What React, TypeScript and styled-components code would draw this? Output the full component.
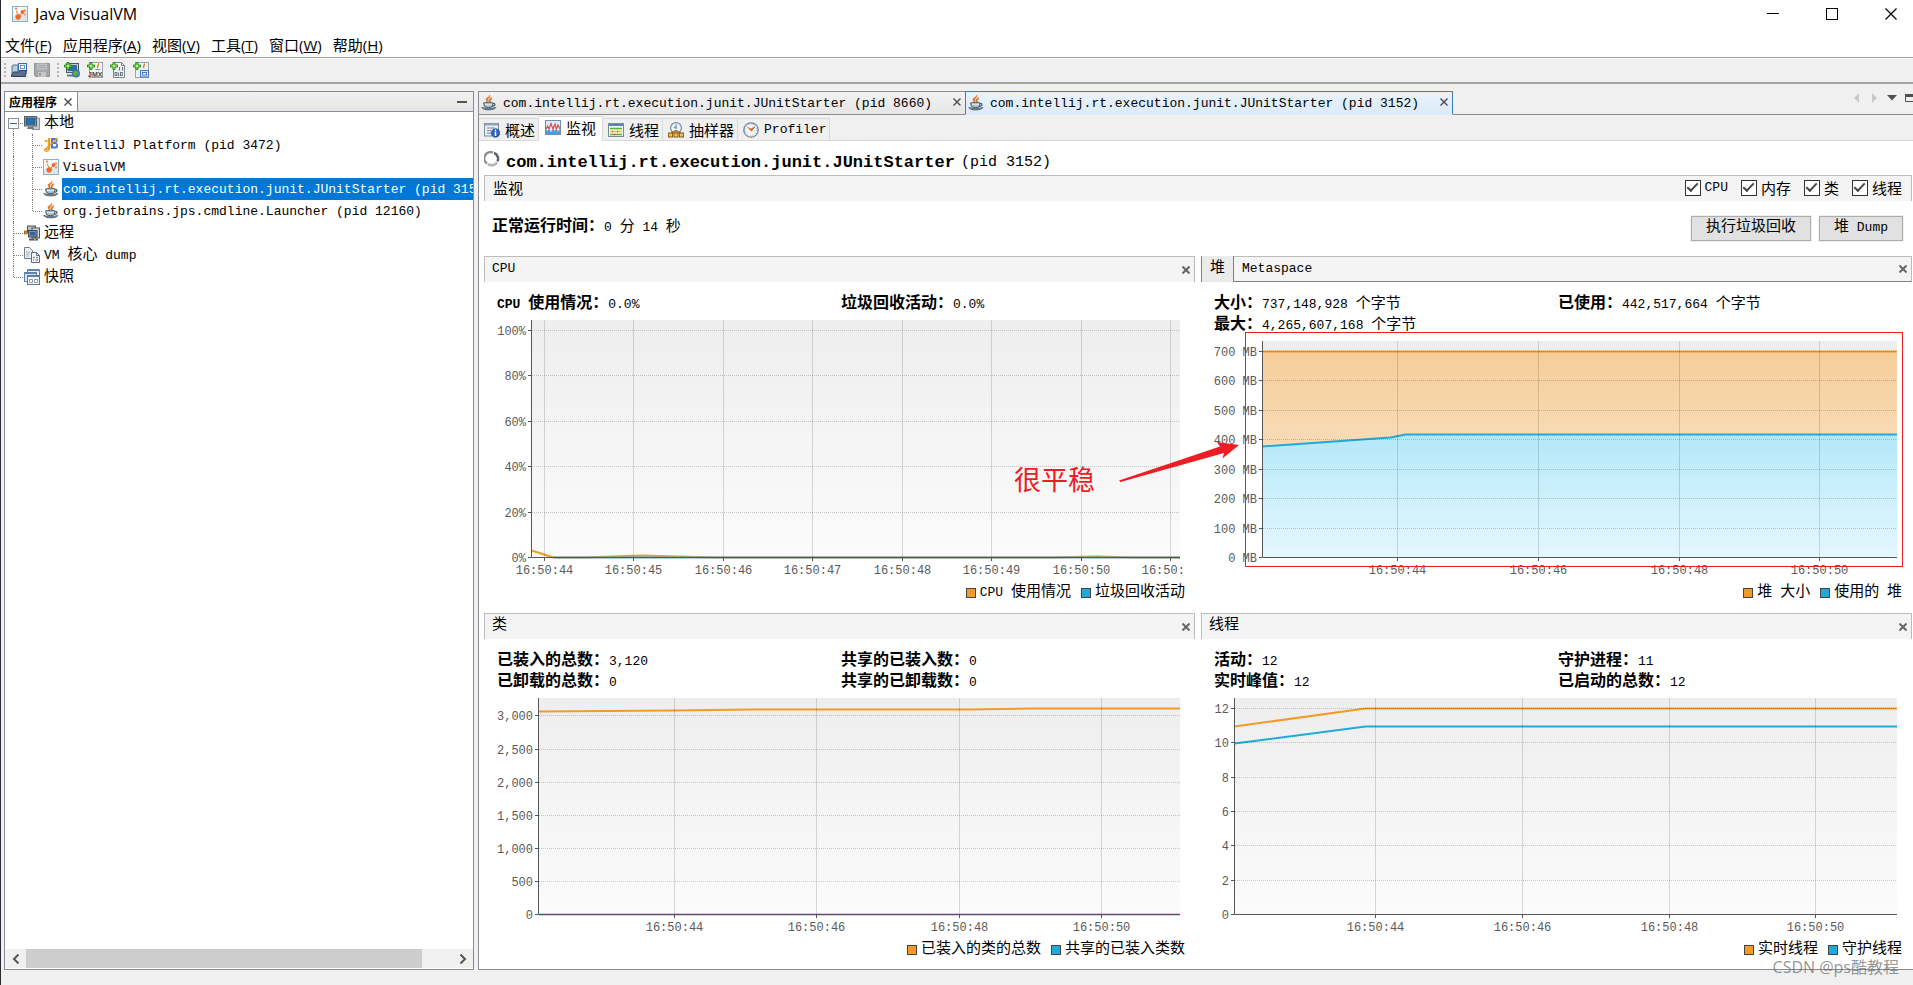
import React, { useLayoutEffect, useRef, useState } from "react";
import styled, { createGlobalStyle, css } from "styled-components";

const MONO = `"Liberation Mono", "Noto Sans CJK SC", monospace`;
const UI = `"Open Sans", "Noto Sans CJK SC", sans-serif`;
const LINE = "#8a8b94";
const ORANGE = "#f39a27";
const BLUE = "#22a9dc";

const GlobalStyle = createGlobalStyle`
  *, *::before, *::after { box-sizing: border-box; }
  body { margin: 0; background: #f0f0f0; color: #000; font-family: ${MONO}; font-size: 13px; }
  button { font: inherit; color: inherit; margin: 0; padding: 0; border: 0; background: none; }
  ul { list-style: none; margin: 0; padding: 0; }
  svg { display: block; flex: none; }
`;

/* ---------- mixed Latin / Chinese text ---------- */

const Han = styled.span`
  font-size: 15px;
  strong & { font-size: 16px; }
`;

const Mixed = ({ text }: { text: string }) => (
  <span>
    {text
      .split(/([\u3000-\u9fff\uff00-\uffef]+)/)
      .filter(Boolean)
      .map((run, i) => (/[\u3000-\uffef]/.test(run) ? <Han key={i}>{run}</Han> : run))}
  </span>
);

/* ---------- icons ---------- */

const Icon = ({ children, size = 16 }: { children: React.ReactNode; size?: number }) => (
  <svg width={size} height={size} viewBox="0 0 16 16" aria-hidden="true">
    {children}
  </svg>
);

const VisualVmIcon = () => (
  <Icon>
    <rect x=".5" y=".5" width="15" height="15" fill="#f6f9fb" stroke="#8fb0c4" />
    <path d="M1 15V10l14-5v10z" fill="#dce8ee" />
    <path d="M3.500 9.500L6 8l2.500 1 .8 2-1.800 2.500-2.500.2-1.500-1.700z" fill="#f26a21" />
    <circle cx="10.500" cy="6" r="1.900" fill="#f26a21" />
    <circle cx="12.800" cy="4.500" r="1.200" fill="#f58a4b" />
    <circle cx="4" cy="2.500" r="1" fill="#f26a21" />
    <circle cx="13" cy="8.500" r="1" fill="#f58a4b" />
    <path d="M7.500 9.500l2.500-3M5.500 8.500L4.500 4.500" stroke="#f26a21" strokeWidth=".9" />
  </Icon>
);

const OpenIcon = () => (
  <Icon>
    <path d="M2 3h5v9H1V4z" fill="#b9cbdc" stroke="#5c7186" />
    <rect x="7.500" y="1.500" width="8" height="7" fill="#e6effb" stroke="#3f6db4" />
    <rect x="9.500" y="3.500" width="4" height="3" fill="#fff" stroke="#6d94cf" />
    <path d="M.5 14.500V13l2-3h5l2-1.500h6l-1 6z" fill="#54718f" stroke="#2f455c" />
  </Icon>
);

const SaveIcon = () => (
  <Icon>
    <path d="M.5 1.500h15v13h-14l-1-1z" fill="#a4a6a9" stroke="#909295" />
    <rect x="3" y="1.500" width="10" height="6" fill="#bfc1c3" />
    <path d="M4 3.500h8M4 5.500h8" stroke="#a4a6a9" />
    <rect x="4" y="10" width="8" height="5" fill="#c3c5c7" />
    <rect x="5" y="11" width="2" height="3" fill="#96989b" />
  </Icon>
);

const Plus = () => (
  <path d="M3 .5h2v2.500h2.500v2H5v2.500H3V5H.5V3H3z" fill="#b5f07a" stroke="#1f8a13" />
);

const AddRemoteIcon = () => (
  <Icon>
    <rect x="2.500" y="1.500" width="12" height="9" fill="#c3cbd2" stroke="#4d5862" />
    <rect x="4" y="3" width="9" height="6" fill="#2e6ea6" />
    <path d="M3 13.500h7" stroke="#6a747d" strokeWidth="2" />
    <circle cx="12" cy="11.500" r="3.800" fill="#3f86c8" stroke="#2d5f85" strokeWidth=".6" />
    <path d="M10 9.500l2-.5 1.500 1.500-1 2.500-2 1-1-2zM14 12l1-1v2z" fill="#5db04a" />
    <Plus />
  </Icon>
);

const JmxText = styled.text`
  font: bold 7px "Liberation Sans", sans-serif;
  fill: #3d4852;
`;

const AddJmxIcon = () => (
  <Icon>
    <rect x="2.500" y=".5" width="13" height="15" fill="#f3f5f7" stroke="#98a3ae" />
    <path d="M11 1.500c2 1.500-2 2.500 0 4.500" stroke="#e0771d" fill="none" strokeWidth="1.300" />
    <path d="M8.500 7.500h5" stroke="#7d93a5" />
    <JmxText x="1" y="15">JMX</JmxText>
    <Plus />
  </Icon>
);

const AddDumpIcon = () => (
  <Icon>
    <path d="M3.500 .5h8l3 3v12h-11z" fill="#f3f5f7" stroke="#7b8893" />
    <path d="M11.500 .5v3h3" fill="none" stroke="#7b8893" />
    <path d="M9.500 5v3.500M12.500 5v3.500M8.500 10.500V14" stroke="#6a7883" strokeWidth="1.200" />
    <rect x="5" y="10.500" width="1.800" height="3" fill="none" stroke="#6a7883" />
    <rect x="10.500" y="10.500" width="1.800" height="3" fill="none" stroke="#6a7883" />
    <Plus />
  </Icon>
);

const AddSnapshotIcon = () => (
  <Icon>
    <rect x="2.500" y=".5" width="13" height="15" fill="#edf2f7" stroke="#98a3ae" />
    <path d="M11 1.500c2 1.500-2 2.500 0 4.500" stroke="#e0771d" fill="none" strokeWidth="1.300" />
    <rect x="7.500" y="8.500" width="8" height="6.500" fill="#dbe8f8" stroke="#4a76bd" />
    <rect x="9.500" y="10.500" width="4" height="2.500" fill="#fff" stroke="#4a76bd" />
    <Plus />
  </Icon>
);

const LocalIcon = () => (
  <Icon>
    <path d="M11 3h4.500v11.500H8z" fill="#c5cbd0" stroke="#87919a" />
    <rect x=".5" y="1.500" width="12" height="9.500" fill="#9aa5ae" stroke="#56616b" />
    <rect x="2" y="3" width="9" height="6.500" fill="#2e6ea6" stroke="#1e4e7b" strokeWidth=".6" />
    <path d="M4 11.500h5l1 2.500H3z" fill="#6f7982" />
  </Icon>
);

const IntelliJIcon = () => (
  <Icon>
    <path d="M8 1h4.500c2.800 0 2.800 4.500.2 4.800 3.200.2 3.200 5.700 0 5.700H8zM10 3v2h2c1.200 0 1.200-2 0-2zM10 7v2.500h2.300c1.300 0 1.300-2.500 0-2.500z" fill="#4a79cc" fillRule="evenodd" />
    <path d="M6 1v9.500c0 3-3.500 4-4.500 1.500" stroke="#f09a18" strokeWidth="2.400" fill="none" />
    <path d="M2 12.500L14.500 1M1.500 3.500l3 1" stroke="#f09a18" strokeWidth="1.500" />
    <circle cx="4" cy="13.500" r="1.500" fill="#f7b64c" />
  </Icon>
);

const JavaIcon = () => (
  <Icon>
    <path d="M8.500 0c2 2.500-3.500 3.500-1.500 7.500C4 5 4.500 3.500 7 2.200 8.300 1.600 8.800 1 8.500 0zM10.500 2.500C12 4 8 5 9.500 8 6.500 6 8 4 10.500 2.500z" fill="#e8731a" stroke="#e8731a" strokeWidth=".5" />
    <path d="M2.500 8c2-1 8.500-1 9.500 0l-.5 3.500C10 13 5 13 3.500 11.500z" fill="#a9bbc7" stroke="#465a68" />
    <path d="M12 8.500c2.800-.5 2.800 2.500-.6 2.800" fill="none" stroke="#465a68" strokeWidth="1.200" />
    <path d="M4 9.200c2 .8 5 .8 7 0" stroke="#eef3f6" fill="none" />
    <path d="M.8 12.500c3 1.200 10.500 1.200 14 0-1 3-12.500 3.400-14 0z" fill="#8ba1af" stroke="#465a68" strokeWidth=".9" />
  </Icon>
);

const RemoteIcon = () => (
  <Icon>
    <rect x="3.500" y="1" width="8" height="6" fill="#b9c1c7" stroke="#4b555e" />
    <rect x="8" y="3" width="7.500" height="10" fill="#d4d9dd" stroke="#4b555e" />
    <rect x="4.500" y="5.500" width="8.500" height="6.500" fill="#8795a1" stroke="#39444e" />
    <rect x="6" y="7" width="5.500" height="3.500" fill="#2d64a4" />
    <path d="M5 14.500h9" stroke="#4b555e" strokeWidth="2" />
    <path d="M0 7.500h4" stroke="#6a4a16" />
    <rect x=".5" y="6" width="2.500" height="3" fill="#e39b2b" stroke="#87560f" strokeWidth=".7" />
    <rect x="10" y="14" width="2" height="1" fill="#7ad14b" />
  </Icon>
);

const CoreDumpIcon = () => (
  <Icon>
    <path d="M.5 .5h5l3 3v8h-8z" fill="#eef1f4" stroke="#6f7e8b" />
    <path d="M2 5h4M2 7h4M2 9h3" stroke="#a5b0ba" />
    <path d="M7.500 5.500h5l3 3v7h-8z" fill="#f5f7f9" stroke="#5f6f7c" />
    <path d="M12.500 5.500v3h3" fill="none" stroke="#5f6f7c" />
    <path d="M9 10.500h2m1 0h2M9 13h1m1.500 0H14" stroke="#8794a0" strokeWidth="1.300" />
  </Icon>
);

const SnapshotIcon = () => (
  <Icon>
    <path d="M3.500 4V.5h12v9H13" fill="#e9eff7" stroke="#5e82b5" />
    <path d="M4 1.500h11" stroke="#5e82b5" />
    <rect x=".5" y="3.500" width="12" height="9" fill="#dde7f4" stroke="#5e82b5" />
    <path d="M1 4.500h11" stroke="#5e82b5" />
    <rect x="3.500" y="6.500" width="12" height="9" fill="#f3f6fa" stroke="#5e7896" />
    <path d="M4 7.500h11" stroke="#5e82b5" />
    <path d="M5.500 10.500h3v3h-3zM10.500 10.500h3v3h-3z" fill="#fff" stroke="#8898a8" />
  </Icon>
);

const OverviewIcon = () => (
  <Icon>
    <rect x=".5" y="1.500" width="14" height="12.500" fill="#e8edf2" stroke="#7c8c9a" />
    <path d="M1 2.500h13" stroke="#93a6b6" strokeWidth="2" />
    <path d="M3 6h8M3 8.500h4M3 11h4" stroke="#7b8a97" />
    <circle cx="11.500" cy="11" r="4.300" fill="#2a62be" stroke="#173f86" strokeWidth=".6" />
    <path d="M11.500 10v4" stroke="#fff" strokeWidth="1.600" />
    <circle cx="11.500" cy="8.500" r=".9" fill="#fff" />
  </Icon>
);

const MonitorIcon = () => (
  <Icon>
    <rect x=".5" y=".5" width="15" height="14" fill="#dfeaf4" stroke="#6d8fae" />
    <path d="M1 14V9l1.500 2L4 9l2 3 2-3 1.500 2L11 9l2 2.500L15 9v5z" fill="#4b9fdc" />
    <path d="M1 9l1.500-3L4 9l2-5.500L8 9l2-5 1.500 5L13 5l2 4" fill="none" stroke="#d9514b" strokeWidth="1.200" />
  </Icon>
);

const ThreadsIcon = () => (
  <Icon>
    <rect x=".5" y="1.500" width="15" height="13" fill="#f5f7f4" stroke="#76889a" />
    <path d="M1 3h14" stroke="#5a86b5" strokeWidth="2" />
    <path d="M2 6.500h12" stroke="#5fae40" strokeWidth="1.600" />
    <path d="M2 9.500h12" stroke="#e7c23a" strokeWidth="1.600" />
    <path d="M2 12.500h12" stroke="#5fae40" strokeWidth="1.600" />
    <path d="M4 9.500h1m4 0h1M6 12.500h1" stroke="#d7573c" strokeWidth="1.600" />
  </Icon>
);

const SamplerIcon = () => (
  <Icon>
    <circle cx="8" cy="6" r="5.400" fill="#eaf1f8" stroke="#7589a0" strokeWidth="1.200" />
    <path d="M8 2.500v4M6 5l2 1.500" stroke="#4372b0" fill="none" />
    <path d="M3 11l5-2.500 5 2.500M8 8v3" stroke="#a96f14" fill="none" strokeWidth="1.200" />
    <rect x=".6" y="11" width="4" height="4" fill="#f0c45b" stroke="#8a5809" />
    <rect x="6" y="11" width="4" height="4" fill="#f0c45b" stroke="#8a5809" />
    <rect x="11.400" y="11" width="4" height="4" fill="#f0c45b" stroke="#8a5809" />
  </Icon>
);

const ProfilerIcon = () => (
  <Icon>
    <circle cx="8" cy="8" r="7.200" fill="#f1f5f9" stroke="#76879a" strokeWidth="1.300" />
    <circle cx="8" cy="8" r="5.600" fill="none" stroke="#8fb0d4" strokeDasharray="1 1.930" />
    <path d="M8.500 9.500L3.500 4.500 8 6.500l4-2z" fill="#e3722d" />
    <path d="M8 8.500l4-3.500" stroke="#c85c1a" />
  </Icon>
);

const SpinnerIcon = () => (
  <Icon>
    <path d="M3 12.500A6.200 6.200 0 0 1 9 1.700" fill="none" stroke="#8d9095" strokeWidth="2.500" />
    <path d="M10 2a6.200 6.200 0 0 1 3.500 8.500" fill="none" stroke="#5f6268" strokeWidth="2.500" />
    <path d="M13 11.500a6.200 6.200 0 0 1-9 1.500" fill="none" stroke="#b0b2b6" strokeWidth="2.500" />
  </Icon>
);

const Cross = ({ size = 8, width = 1.5, color = "#4a4a4a" }: { size?: number; width?: number; color?: string }) => (
  <svg width={size} height={size} viewBox={`0 0 ${size} ${size}`} aria-hidden="true">
    <path d={`M.5 .5L${size - 0.5} ${size - 0.5}M${size - 0.5} .5L.5 ${size - 0.5}`} stroke={color} strokeWidth={width} />
  </svg>
);

/* ---------- window frame ---------- */

const Window = styled.div`
  position: relative;
  display: flex;
  flex-direction: column;
  min-height: 100vh;
  overflow: hidden;
  border-left: 1px solid #2a2a2e;
  background: #f0f0f0;
`;

const TitleBar = styled.header`
  display: flex;
  align-items: center;
  height: 30px;
  padding: 0 16px 2px 11px;
  background: #fff;
  font: 16px ${UI};
`;

const Title = styled.h1`
  flex: 1;
  margin: 0 0 0 7px;
  font: inherit;
`;

const CaptionButtons = styled.div`
  display: flex;
  gap: 47px;
`;

const MenuBar = styled.nav`
  display: flex;
  align-items: center;
  gap: 11px;
  height: 28px;
  padding: 2px 4px 0 4px;
  background: #fff;
  border-bottom: 1px solid #a0a0a0;
  font: 15px ${UI};
`;

const Toolbar = styled.div`
  display: flex;
  align-items: center;
  gap: 7px;
  height: 26px;
  padding: 0 3px 1px;
  border-top: 1px solid #fff;
  border-bottom: 2px solid #a3a3a3;
`;

const Grip = styled.span`
  width: 2px;
  height: 15px;
  margin-right: -2px;
  background: repeating-linear-gradient(#b4b4b4 0 2px, transparent 2px 4px);
`;

const Workspace = styled.div`
  flex: 1;
  display: flex;
  gap: 4px;
  min-height: 0;
  padding: 7px 0 15px 3px;
`;

/* ---------- applications panel ---------- */

const SidePanel = styled.aside`
  flex: none;
  width: 470px;
  display: flex;
  flex-direction: column;
  border: 1px solid ${LINE};
  background: #fff;
`;

const SideHeader = styled.div`
  display: flex;
  height: 20px;
  border-bottom: 1px solid ${LINE};
  background: linear-gradient(#f2f2f2, #e4e4e4);
`;

const SideTab = styled.div`
  display: flex;
  align-items: center;
  gap: 7px;
  padding: 0 5px 0 4px;
  border-right: 1px solid ${LINE};
  background: #fff;
  font: bold 12px ${MONO};
`;

const MinimizeButton = styled.button`
  width: 10px;
  margin: 0 6px 0 auto;
  &::before { content: ""; display: block; height: 2px; background: #555; }
`;

const Tree = styled.ul`
  flex: 1;
  overflow: hidden;
`;

const TreeRow = styled.li`
  display: flex;
  align-items: center;
  height: 22px;
  white-space: pre;
`;

const TreeLabel = styled.span<{ $selected?: boolean }>`
  flex: 1 0 auto;
  height: 22px;
  margin-left: 3px;
  padding-left: 1px;
  line-height: 23px;
  ${(p) => p.$selected && css`background: #0078d7; color: #fff;`}
`;

type Rail = "through" | "end" | "start" | "line";

const Guide = styled.span<{ $rail: Rail }>`
  position: relative;
  flex: none;
  width: 19px;
  height: 22px;
  &::before {
    content: "";
    position: absolute;
    left: 8px;
    top: ${(p) => (p.$rail === "start" ? "11px" : "0")};
    height: ${(p) => (p.$rail === "end" || p.$rail === "start" ? "11px" : "22px")};
    border-left: 1px dotted #808080;
  }
  &::after {
    content: "";
    position: absolute;
    left: 9px;
    right: 1px;
    top: 11px;
    border-top: ${(p) => (p.$rail === "line" ? "0" : "1px dotted #808080")};
  }
`;

const Expander = styled.button`
  position: absolute;
  z-index: 1;
  left: 3px;
  top: 6px;
  width: 11px;
  height: 11px;
  border: 1px solid #919191;
  background: linear-gradient(90deg, #3a5fa5, #3a5fa5) center / 7px 1px no-repeat, #f8f8f8;
`;

const ScrollBar = styled.div`
  display: grid;
  grid-template-columns: 21px 1fr 21px;
  align-items: center;
  justify-items: center;
  height: 20px;
  border-bottom: 1px solid #fff;
  background: #f0f0f0;
`;

const Track = styled.div`
  width: 100%;
  height: 19px;
  &::before { content: ""; display: block; width: 93%; height: 100%; background: #cdcdcd; }
`;

/* ---------- document area ---------- */

const Main = styled.main`
  flex: 1;
  min-width: 0;
  display: flex;
  flex-direction: column;
`;

const DocTabs = styled.div`
  display: flex;
  height: 24px;
`;

const DocTab = styled.div<{ $active?: boolean }>`
  flex: 0 1 488px;
  display: flex;
  align-items: center;
  gap: 6px;
  min-width: 0;
  padding: 0 4px 0 2px;
  border: 1px solid ${(p) => (p.$active ? "#3c7fb1" : LINE)};
  border-bottom-color: ${(p) => (p.$active ? "#dcebf9" : LINE)};
  background: ${(p) => (p.$active ? "linear-gradient(#e9f3fc, #dcebf9)" : "linear-gradient(#f2f2f2, #e6e6e6)")};
  line-height: 22px;
  white-space: pre;
  & + & { margin-left: -1px; }
  span { padding-top: 2px; }
  button { margin-left: auto; margin-bottom: 2px; }
`;

const DocTools = styled.div`
  flex: 1;
  display: flex;
  justify-content: flex-end;
  align-items: flex-start;
  gap: 8px;
  padding-top: 2px;
  border-bottom: 1px solid ${LINE};
`;

const DocBody = styled.div`
  flex: 1;
  display: flex;
  flex-direction: column;
  border: solid ${LINE};
  border-width: 0 0 1px 1px;
  background: #fff;
`;

const ViewTabs = styled.div`
  display: flex;
  align-items: flex-end;
  height: 26px;
  border-bottom: 1px solid #d9d9d9;
  background: #f0f0f0;
`;

const ViewTab = styled.button<{ $active?: boolean }>`
  display: flex;
  align-items: center;
  gap: 5px;
  height: 22px;
  padding: 0 3px 0 5px;
  border: 1px solid #d9d9d9;
  border-width: 1px 1px 0 0;
  white-space: pre;
  ${(p) =>
    p.$active &&
    css`
      height: 25px;
      margin-bottom: -1px;
      padding: 0 6px 3px 6px;
      background: #fff;
    `}
`;

const Content = styled.div`
  flex: 1;
  display: flex;
  flex-direction: column;
  padding: 0 1px 0 5px;
`;

const Heading = styled.h2`
  display: flex;
  align-items: center;
  gap: 6px;
  height: 34px;
  margin: 0;
  padding-top: 8px;
  font: bold 17px ${MONO};
  white-space: pre;
  svg { margin-bottom: 6px; }
`;

const Pid = styled.span`
  font: 15px ${MONO};
`;

const SectionBar = styled.div`
  display: flex;
  align-items: center;
  justify-content: space-between;
  height: 26px;
  padding: 0 9px 2px 8px;
  border: 1px solid #bcbcbc;
  border-bottom: 0;
  background: #f4f4f4;
`;

const Checks = styled.div`
  display: flex;
  gap: 13px;
`;

const CheckLabel = styled.label`
  display: flex;
  align-items: center;
  gap: 4px;
`;

const CheckBox = styled.input`
  appearance: none;
  display: grid;
  place-content: center;
  width: 16px;
  height: 16px;
  margin: 0;
  border: 1px solid #333;
  background: #fff;
  &:checked::before {
    content: "";
    width: 11px;
    height: 6px;
    margin-top: -3px;
    border: solid #444;
    border-width: 0 0 2px 2px;
    transform: rotate(-47deg);
  }
`;

const Summary = styled.div`
  display: flex;
  align-items: flex-start;
  justify-content: space-between;
  height: 55px;
  padding: 15px 9px 0 8px;
  line-height: 23px;
`;

const Actions = styled.div`
  display: flex;
  gap: 8px;
`;

const PushButton = styled.button`
  height: 25px;
  padding: 0 14px 2px;
  border: 1px solid #adadad;
  background: #e1e1e1;
  outline: 1px solid #f0f0f0;
  line-height: 21px;
`;

const Grid = styled.div`
  flex: 1;
  display: grid;
  grid-template-columns: 1fr 1fr;
  grid-auto-rows: minmax(356px, 1fr);
  gap: 1px 6px;
`;

const Cell = styled.section`
  position: relative;
  display: flex;
  flex-direction: column;
  min-width: 0;
  padding-bottom: 8px;
`;

const CellBar = styled.div<{ $tabs?: boolean }>`
  display: flex;
  align-items: center;
  height: 26px;
  padding: 0 4px 0 7px;
  border: 1px solid #bcbcbc;
  border-bottom: 0;
  background: #f4f4f4;
  line-height: 21px;
  > span { padding-bottom: 2px; }
  > button:last-child { margin-left: auto; }
  ${(p) => p.$tabs && css`padding-left: 0; border-bottom: 1px solid #808080; border-left-color: #808080;`}
`;

const CellTab = styled.button<{ $active?: boolean }>`
  height: 26px;
  padding: 0 8px 2px;
  ${(p) => p.$active && css`border-right: 1px solid #808080; background: #ebebeb;`}
`;

const Facts = styled.dl`
  display: grid;
  grid-template-columns: 1fr 1fr;
  margin: 0;
  padding: 12px 10px 5px 13px;
  line-height: 21px;
  white-space: pre;
  > div { display: flex; height: 21px; }
  dt, dd { margin: 0; }
`;

const Legend = styled.div`
  display: flex;
  justify-content: flex-end;
  align-items: center;
  gap: 10px;
  height: 25px;
  padding: 2px 10px 0 0;
  line-height: 23px;
  white-space: pre;
`;

const Key = styled.span<{ $color: string }>`
  display: flex;
  align-items: center;
  gap: 4px;
  &::before {
    content: "";
    width: 10px;
    height: 10px;
    border: 1px solid #444;
    background: ${(p) => p.$color};
  }
`;

/* ---------- charts ---------- */

const Plot = styled.svg`
  flex: 1 1 0;
  width: calc(100% - 11px);
  min-height: 0;
  overflow: hidden;
  font: 12px ${MONO};
  fill: #5a5a5a;
`;

type Series = { color: string; points: [number, number][]; fill?: [string, string] };

type ChartProps = {
  id: string;
  axis: number;
  max: number;
  yTicks: [number, string][];
  xStart: number;
  xStep: number;
  xLabels: string[];
  series: Series[];
};

const EDGE = 4;

const Chart = ({ id, axis, max, yTicks, xStart, xStep, xLabels, series }: ChartProps) => {
  const ref = useRef<SVGSVGElement>(null);
  const [size, setSize] = useState({ w: 0, h: 0 });

  useLayoutEffect(() => {
    const el = ref.current!;
    const measure = () => {
      const box = el.getBoundingClientRect();
      setSize({ w: box.width, h: box.height });
    };
    measure();
    const observer = new ResizeObserver(measure);
    observer.observe(el);
    return () => observer.disconnect();
  }, []);

  const width = Math.max(0, size.w - axis - EDGE);
  const right = axis + width;
  const base = Math.max(0, Math.round(size.h) - 22);
  const px = (t: number) => axis + Math.round(t * width) + 0.5;
  const py = (v: number) => base - Math.round((v / max) * base) + 0.5;

  return (
    <Plot ref={ref} role="img" aria-label={id}>
      <defs>
        <linearGradient id={`${id}-bg`} x1="0" y1="0" x2="0" y2="1">
          <stop offset="0" stopColor="#eeeeee" />
          <stop offset="1" stopColor="#fbfbfb" />
        </linearGradient>
        {series.map(
          (s, i) =>
            s.fill && (
              <linearGradient key={i} id={`${id}-fill-${i}`} x1="0" y1="0" x2="0" y2="1">
                <stop offset="0" stopColor={s.fill[0]} />
                <stop offset="1" stopColor={s.fill[1]} />
              </linearGradient>
            )
        )}
      </defs>
      <rect x={axis} y="0" width={width} height={base} fill={`url(#${id}-bg)`} />
      {series.map((s, i) => {
        const line = s.points.map(([t, v]) => `${Math.min(px(t), right)},${py(v)}`).join(" ");
        return (
          <g key={i}>
            {s.fill && <polygon points={`${px(0)},${base} ${line} ${right},${base}`} fill={`url(#${id}-fill-${i})`} />}
            <polyline points={line} fill="none" stroke={s.color} strokeWidth="2" />
          </g>
        );
      })}
      {yTicks.map(([v, label]) => (
        <g key={label}>
          {v > 0 && <path d={`M${axis + 1} ${py(v)}H${right}`} stroke="#000" strokeOpacity=".2" strokeDasharray="1 1" />}
          <path d={`M${axis - 3} ${py(v)}h3`} stroke="#55565a" />
          <text x={axis - 5} y={py(v) + 4} textAnchor="end">{label}</text>
        </g>
      ))}
      {xLabels.map((label, i) => (
        <g key={label}>
          <path d={`M${px(xStart + i * xStep)} 0V${base}`} stroke="#000" strokeOpacity=".14" />
          <path d={`M${px(xStart + i * xStep)} ${base}v4`} stroke="#55565a" />
          <text x={px(xStart + i * xStep)} y={base + 17} textAnchor="middle">{label}</text>
        </g>
      ))}
      <path d={`M${axis + 0.5} 0V${base + 0.5}H${right}`} fill="none" stroke="#55565a" />
    </Plot>
  );
};

const FactList = ({ items }: { items: ([string, string] | null)[] }) => (
  <Facts>
    {items.map((item, i) =>
      item ? (
        <div key={i}>
          <dt><strong><Mixed text={item[0]} /></strong></dt>
          <dd><Mixed text={item[1]} /></dd>
        </div>
      ) : (
        <div key={i} />
      )
    )}
  </Facts>
);

const Keys = ({ first, second }: { first: string; second: string }) => (
  <Legend>
    <Key $color={ORANGE}><Mixed text={first} /></Key>
    <Key $color={BLUE}><Mixed text={second} /></Key>
  </Legend>
);

const CloseCell = () => (
  <button aria-label="关闭"><Cross size={8} width={2} color="#666" /></button>
);

/* ---------- annotations over the heap chart ---------- */

const Frame = styled.div`
  position: absolute;
  inset: 76px 9px 45px 44px;
  border: 1px solid #ee1c25;
  pointer-events: none;
`;

const Note = styled.div`
  position: absolute;
  right: calc(100% + 106px);
  top: 204px;
  color: #ee1c25;
  font: 27px/38px "Noto Sans CJK SC", sans-serif;
  white-space: nowrap;
`;

const Arrow = styled.svg`
  position: absolute;
  left: -83px;
  top: 185px;
`;

const Watermark = styled.div`
  position: absolute;
  right: 14px;
  bottom: 7px;
  color: rgba(90, 90, 90, 0.65);
  font: 16px/22px "Open Sans", "Noto Sans CJK SC", sans-serif;
`;

/* ---------- data ---------- */

const MENUS: [string, string][] = [
  ["文件", "F"], ["应用程序", "A"], ["视图", "V"], ["工具", "T"], ["窗口", "W"], ["帮助", "H"],
];

const CHILDREN: { icon: React.ReactNode; text: string; selected?: boolean }[] = [
  { icon: <IntelliJIcon />, text: "IntelliJ Platform (pid 3472)" },
  { icon: <VisualVmIcon />, text: "VisualVM" },
  { icon: <JavaIcon />, text: "com.intellij.rt.execution.junit.JUnitStarter (pid 3152)", selected: true },
  { icon: <JavaIcon />, text: "org.jetbrains.jps.cmdline.Launcher (pid 12160)" },
];

const ROOTS = [
  { icon: <RemoteIcon />, text: "远程" },
  { icon: <CoreDumpIcon />, text: "VM 核心 dump" },
  { icon: <SnapshotIcon />, text: "快照" },
];

const VIEWS = [
  { icon: <OverviewIcon />, text: "概述" },
  { icon: <MonitorIcon />, text: "监视", active: true },
  { icon: <ThreadsIcon />, text: "线程" },
  { icon: <SamplerIcon />, text: "抽样器" },
  { icon: <ProfilerIcon />, text: "Profiler" },
];

const ticks = (from: number, to: number, step: number, suffix = ""): [number, string][] => {
  const out: [number, string][] = [];
  for (let v = from; v <= to; v += step) out.push([v, v.toLocaleString("en-US") + suffix]);
  return out;
};

const EVEN = ["16:50:44", "16:50:46", "16:50:48", "16:50:50"];

export default function App() {
  return (
    <>
      <GlobalStyle />
      <Window>
        <TitleBar>
          <VisualVmIcon />
          <Title>Java VisualVM</Title>
          <CaptionButtons>
            <button aria-label="最小化">
              <svg width="12" height="12"><path d="M0 5.500h12" stroke="#000" /></svg>
            </button>
            <button aria-label="最大化">
              <svg width="12" height="12"><rect x=".5" y=".5" width="11" height="11" fill="none" stroke="#000" /></svg>
            </button>
            <button aria-label="关闭窗口"><Cross size={12} width={1.2} color="#000" /></button>
          </CaptionButtons>
        </TitleBar>

        <MenuBar>
          {MENUS.map(([name, key]) => (
            <button key={key}>{name}(<u>{key}</u>)</button>
          ))}
        </MenuBar>

        <Toolbar>
          <Grip />
          <button aria-label="打开"><OpenIcon /></button>
          <button aria-label="保存" disabled><SaveIcon /></button>
          <Grip />
          <button aria-label="添加远程主机"><AddRemoteIcon /></button>
          <button aria-label="添加 JMX 连接"><AddJmxIcon /></button>
          <button aria-label="添加核心 dump"><AddDumpIcon /></button>
          <button aria-label="添加快照"><AddSnapshotIcon /></button>
        </Toolbar>

        <Workspace>
          <SidePanel>
            <SideHeader>
              <SideTab>
                应用程序
                <button aria-label="关闭面板"><Cross size={8} width={1.4} /></button>
              </SideTab>
              <MinimizeButton aria-label="最小化面板" />
            </SideHeader>
            <Tree>
              <TreeRow>
                <Guide $rail="start"><Expander aria-label="折叠" /></Guide>
                <LocalIcon />
                <TreeLabel><Mixed text="本地" /></TreeLabel>
              </TreeRow>
              {CHILDREN.map((node, i) => (
                <TreeRow key={node.text}>
                  <Guide $rail="line" />
                  <Guide $rail={i === CHILDREN.length - 1 ? "end" : "through"} />
                  {node.icon}
                  <TreeLabel $selected={node.selected}><Mixed text={node.text} /></TreeLabel>
                </TreeRow>
              ))}
              {ROOTS.map((node, i) => (
                <TreeRow key={node.text}>
                  <Guide $rail={i === ROOTS.length - 1 ? "end" : "through"} />
                  {node.icon}
                  <TreeLabel><Mixed text={node.text} /></TreeLabel>
                </TreeRow>
              ))}
            </Tree>
            <ScrollBar>
              <button aria-label="向左滚动">
                <svg width="8" height="10"><path d="M6.500 .5L2 5l4.500 4.500" fill="none" stroke="#555" strokeWidth="2" /></svg>
              </button>
              <Track />
              <button aria-label="向右滚动">
                <svg width="8" height="10"><path d="M1.500 .5L6 5 1.500 9.500" fill="none" stroke="#555" strokeWidth="2" /></svg>
              </button>
            </ScrollBar>
          </SidePanel>

          <Main>
            <DocTabs>
              <DocTab>
                <JavaIcon />
                <Mixed text="com.intellij.rt.execution.junit.JUnitStarter (pid 8660)" />
                <button aria-label="关闭标签"><Cross size={8} width={1.4} /></button>
              </DocTab>
              <DocTab $active>
                <JavaIcon />
                <Mixed text="com.intellij.rt.execution.junit.JUnitStarter (pid 3152)" />
                <button aria-label="关闭标签"><Cross size={8} width={1.4} /></button>
              </DocTab>
              <DocTools>
                <button aria-label="上一个">
                  <svg width="10" height="10"><path d="M8 0v10L3 5z" fill="#c8c8c8" /></svg>
                </button>
                <button aria-label="下一个">
                  <svg width="10" height="10"><path d="M3 0v10l5-5z" fill="#c8c8c8" /></svg>
                </button>
                <button aria-label="列表">
                  <svg width="10" height="10"><path d="M0 2h10L5 7.500z" fill="#505050" /></svg>
                </button>
                <button aria-label="最大化视图">
                  <svg width="8" height="10"><path d="M8 8.500H.5v-6H8" fill="none" stroke="#505050" /><path d="M0 2.500h8" stroke="#505050" strokeWidth="3" /></svg>
                </button>
              </DocTools>
            </DocTabs>

            <DocBody>
              <ViewTabs>
                {VIEWS.map((view) => (
                  <ViewTab key={view.text} $active={view.active}>
                    {view.icon}
                    <Mixed text={view.text} />
                  </ViewTab>
                ))}
              </ViewTabs>

              <Content>
                <Heading>
                  <SpinnerIcon />
                  com.intellij.rt.execution.junit.JUnitStarter
                  <Pid>(pid 3152)</Pid>
                </Heading>

                <SectionBar>
                  <Mixed text="监视" />
                  <Checks>
                    {["CPU", "内存", "类", "线程"].map((name) => (
                      <CheckLabel key={name}>
                        <CheckBox type="checkbox" defaultChecked />
                        <Mixed text={name} />
                      </CheckLabel>
                    ))}
                  </Checks>
                </SectionBar>

                <Summary>
                  <span>
                    <strong><Mixed text="正常运行时间：" /></strong>
                    <Mixed text="0 分 14 秒" />
                  </span>
                  <Actions>
                    <PushButton><Mixed text="执行垃圾回收" /></PushButton>
                    <PushButton><Mixed text="堆 Dump" /></PushButton>
                  </Actions>
                </Summary>

                <Grid>
                  <Cell>
                    <CellBar><Mixed text="CPU" /><CloseCell /></CellBar>
                    <FactList items={[["CPU 使用情况：", "0.0%"], ["垃圾回收活动：", "0.0%"]]} />
                    <Chart
                      id="cpu"
                      axis={47}
                      max={104.4}
                      yTicks={ticks(0, 100, 20, "%")}
                      xStart={0.02}
                      xStep={0.1378}
                      xLabels={["44", "45", "46", "47", "48", "49", "50", "51"].map((s) => `16:50:${s}`)}
                      series={[
                        { color: ORANGE, points: [[0, 3], [0.034, 0], [0.08, 0], [0.17, 0.9], [0.28, 0], [0.8, 0], [0.87, 0.5], [0.93, 0], [1, 0]] },
                        { color: "#5aa9b4", points: [[0.034, 0], [1, 0]] },
                      ]}
                    />
                    <Keys first="CPU 使用情况" second="垃圾回收活动" />
                  </Cell>

                  <Cell>
                    <CellBar $tabs>
                      <CellTab $active><Mixed text="堆" /></CellTab>
                      <CellTab><Mixed text="Metaspace" /></CellTab>
                      <CloseCell />
                    </CellBar>
                    <FactList
                      items={[["大小：", "737,148,928 个字节"], ["已使用：", "442,517,664 个字节"], ["最大：", "4,265,607,168 个字节"], null]}
                    />
                    <Chart
                      id="heap"
                      axis={61}
                      max={733.8}
                      yTicks={ticks(0, 700, 100, " MB")}
                      xStart={0.2126}
                      xStep={0.2217}
                      xLabels={EVEN}
                      series={[
                        { color: ORANGE, points: [[0, 700], [1, 700]], fill: ["#f5cd99", "#fceedb"] },
                        { color: BLUE, points: [[0, 378], [0.202, 409], [0.225, 419], [1, 419]], fill: ["#b4e8f9", "#e4f7fe"] },
                      ]}
                    />
                    <Keys first="堆 大小" second="使用的 堆" />
                    <Frame />
                    <Note>很平稳</Note>
                    <Arrow width="122" height="42">
                      <path d="M1 39.500L102 5.500 99 1l22 3-16.500 13.500 1.500-5.500L2.500 41z" fill="#ee1c25" />
                    </Arrow>
                  </Cell>

                  <Cell>
                    <CellBar><Mixed text="类" /><CloseCell /></CellBar>
                    <FactList
                      items={[["已装入的总数：", "3,120"], ["共享的已装入数：", "0"], ["已卸载的总数：", "0"], ["共享的已卸载数：", "0"]]}
                    />
                    <Chart
                      id="classes"
                      axis={54}
                      max={3263}
                      yTicks={ticks(0, 3000, 500)}
                      xStart={0.212}
                      xStep={0.2218}
                      xLabels={EVEN}
                      series={[
                        { color: ORANGE, points: [[0, 3063], [0.21, 3078], [0.33, 3093], [0.67, 3093], [0.77, 3108], [1, 3108]] },
                        { color: "#5cc8dc", points: [[0, 0], [1, 0]] },
                      ]}
                    />
                    <Keys first="已装入的类的总数" second="共享的已装入类数" />
                  </Cell>

                  <Cell>
                    <CellBar><Mixed text="线程" /><CloseCell /></CellBar>
                    <FactList items={[["活动：", "12"], ["守护进程：", "11"], ["实时峰值：", "12"], ["已启动的总数：", "12"]]} />
                    <Chart
                      id="threads"
                      axis={33}
                      max={12.58}
                      yTicks={ticks(0, 12, 2)}
                      xStart={0.2127}
                      xStep={0.2214}
                      xLabels={EVEN}
                      series={[
                        { color: ORANGE, points: [[0, 10.95], [0.198, 12], [1, 12]] },
                        { color: BLUE, points: [[0, 9.95], [0.198, 10.95], [1, 10.95]] },
                      ]}
                    />
                    <Keys first="实时线程" second="守护线程" />
                  </Cell>
                </Grid>
              </Content>
            </DocBody>
          </Main>
        </Workspace>
        <Watermark>CSDN @ps酷教程</Watermark>
      </Window>
    </>
  );
}
